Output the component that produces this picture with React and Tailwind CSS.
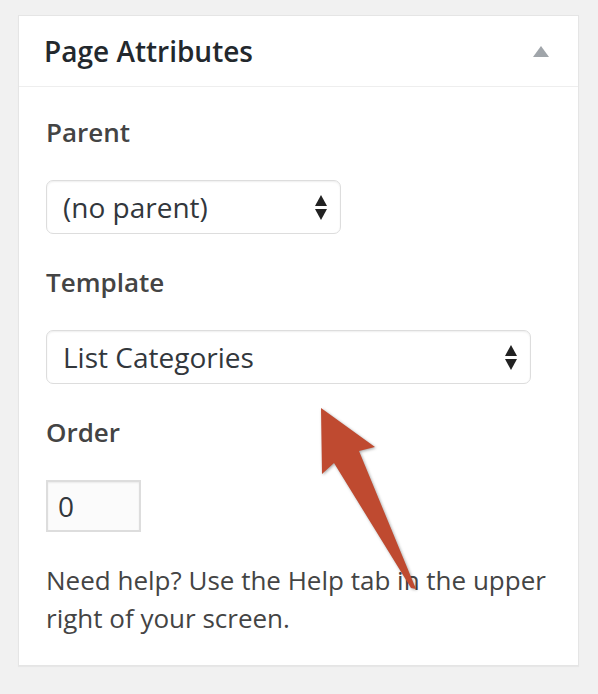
import React from "react";

function UpDown() {
  return (
    <svg width="12" height="25" viewBox="0 0 12 25" className="shrink-0">
      <polygon points="6,0 12,11 0,11" fill="#222" />
      <polygon points="0,14 12,14 6,25" fill="#222" />
    </svg>
  );
}

export default function App() {
  return (
    <div
      className="relative w-[598px] h-[694px] bg-[#f1f1f1] overflow-hidden"
      style={{ fontFamily: '"Open Sans", "Noto Sans", sans-serif' }}
    >
      <div className="ml-[18px] pt-[15px] w-[561px]">
        <div className="bg-white border border-[#e5e5e5] shadow-[0_1px_1px_rgba(0,0,0,0.04)]">
          <div className="flex items-center justify-between h-[71px] px-[25px] border-b border-[#eee]">
            <h2 className="text-[28px] font-semibold text-[#23282d] leading-[39px]">Page Attributes</h2>
            <svg width="16" height="11" viewBox="0 0 16 11" className="mr-[4px]">
              <polygon points="8,0 16,11 0,11" fill="#a0a5aa" />
            </svg>
          </div>
          <div className="px-[27px] pb-[28px] text-[#444]">
            <p className="mt-[26px] text-[26px] font-semibold leading-[39px]">Parent</p>
            <div className="mt-[28px] w-[295px] h-[54px] border border-[#ddd] rounded-[7px] shadow-[inset_0_1px_2px_rgba(0,0,0,0.07)] flex items-center justify-between pl-[16px] pr-[13px]">
              <span className="text-[28px] text-[#32373c] leading-none">(no parent)</span>
              <UpDown />
            </div>
            <p className="mt-[29px] text-[26px] font-semibold leading-[39px]">Template</p>
            <div className="mt-[28px] w-[485px] h-[54px] border border-[#ddd] rounded-[7px] shadow-[inset_0_1px_2px_rgba(0,0,0,0.07)] flex items-center justify-between pl-[16px] pr-[13px]">
              <span className="text-[28px] text-[#32373c] leading-none">List Categories</span>
              <UpDown />
            </div>
            <p className="mt-[29px] text-[26px] font-semibold leading-[39px]">Order</p>
            <div className="mt-[28px] w-[95px] h-[52px] border-2 border-[#ddd] bg-[#fbfbfb] shadow-[inset_0_1px_2px_rgba(0,0,0,0.07)] flex items-center pl-[10px]">
              <span className="text-[28px] text-[#32373c] leading-none">0</span>
            </div>
            <p className="mt-[29px] text-[26px] leading-[38px] text-[#444]">
              Need help? Use the Help tab in the upper right of your screen.
            </p>
          </div>
        </div>
      </div>
      <svg
        className="absolute left-0 top-0 pointer-events-none"
        width="598"
        height="694"
        viewBox="0 0 598 694"
        style={{ filter: "drop-shadow(1px 1px 1.5px rgba(0,0,0,0.35))" }}
      >
        <polygon
          points="321,408 375,447 359,451 416,589 411,588 334,463 322,474"
          fill="#bf4a30"
        />
      </svg>
    </div>
  );
}
